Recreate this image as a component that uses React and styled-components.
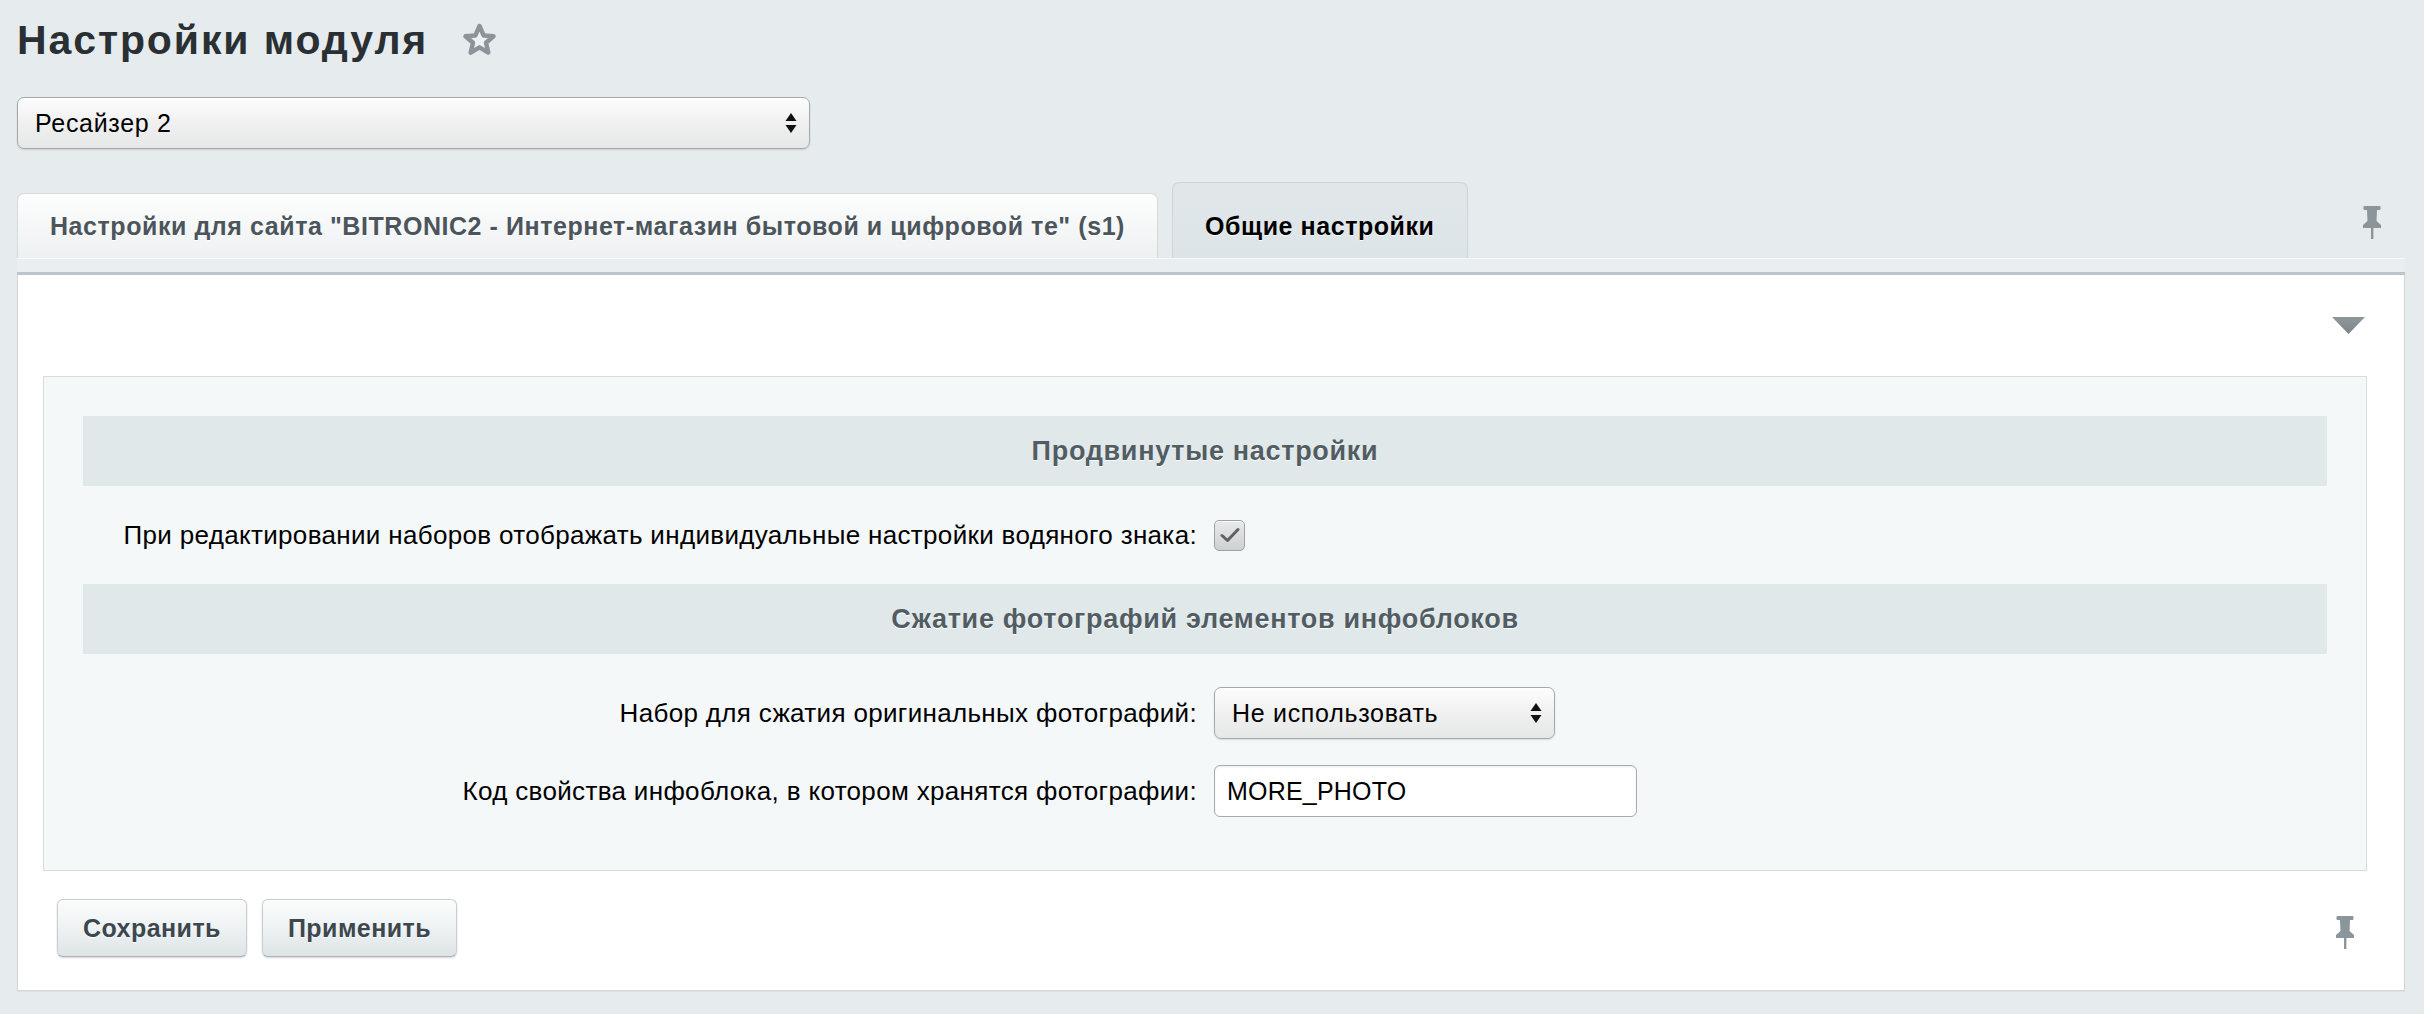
import React from "react";
import styled, { createGlobalStyle } from "styled-components";

const GlobalStyle = createGlobalStyle`
  html, body { margin: 0; padding: 0; }
  body {
    background: #e6ebed;
    font-family: "Liberation Sans", Arial, Helvetica, sans-serif;
    color: #000;
  }
`;

const Page = styled.div`
  padding: 17px 19px 23px 17px;
`;

const TitleRow = styled.div`
  display: flex;
  align-items: center;
  height: 46px;
`;

const Title = styled.h1`
  margin: 0;
  font-size: 41px;
  line-height: 46px;
  font-weight: bold;
  color: #2a2f33;
  letter-spacing: 1.9px;
`;

const StarWrap = styled.span`
  display: inline-flex;
  margin-left: 34px;
  width: 35px;
  height: 34px;
`;

const SelectBox = styled.div`
  box-sizing: border-box;
  display: flex;
  align-items: center;
  justify-content: space-between;
  width: ${(p) => p.$width}px;
  height: 52px;
  margin-top: ${(p) => p.$mt || 0}px;
  padding: 0 12px 0 ${(p) => p.$pl || 17}px;
  border: 1px solid #a3a9ac;
  border-radius: 7px;
  background: linear-gradient(#fdfdfd, #f1f1f1 45%, #e6e7e7);
  box-shadow: 0 1px 2px rgba(0, 0, 0, 0.12), inset 0 1px 0 #fff;
  font-size: 25px;
  letter-spacing: 0.7px;
  color: #000;
`;

const Arrows = () => (
  <svg width="12" height="22" viewBox="0 0 12 22">
    <path d="M6 1 L11.5 9 H0.5 Z" fill="#111" />
    <path d="M6 21 L11.5 13 H0.5 Z" fill="#111" />
  </svg>
);

const TabsRow = styled.div`
  display: flex;
  align-items: flex-end;
  gap: 14px;
  margin-top: 33px;
  height: 76px;
`;

const Tab = styled.div`
  box-sizing: border-box;
  height: ${(p) => (p.$active ? 76 : 65)}px;
  padding: ${(p) => (p.$active ? 28 : 17)}px 32px 0 32px;
  border: 1px solid ${(p) => (p.$active ? "#cdd5d8" : "#d3dadd")};
  border-bottom: none;
  border-radius: 7px 7px 0 0;
  background: ${(p) =>
    p.$active
      ? "linear-gradient(#e1e7e9, #dde4e7)"
      : "linear-gradient(#fdfdfd, #eef1f2)"};
  font-size: 25px;
  line-height: 30px;
  letter-spacing: 0.56px;
  font-weight: bold;
  white-space: nowrap;
  color: ${(p) => (p.$active ? "#000" : "#4b555b")};
  text-shadow: 0 1px 0 rgba(255, 255, 255, 0.8);
`;

const PinSlot = styled.div`
  margin-left: auto;
  margin-right: 23px;
  align-self: flex-start;
  margin-top: 24px;
  display: flex;
`;

const Pin = () => (
  <svg width="20" height="33" viewBox="0 0 20 33">
    <g fill="#8c9599">
      <rect x="1.5" y="0" width="17" height="4" rx="1" />
      <path d="M5 4 H15 L14.5 16 H5.5 Z" />
      <path d="M5.5 15 H14.5 L19 19 V22 H1 V19 Z" />
      <rect x="9" y="22" width="2.4" height="11" />
    </g>
  </svg>
);

const TabStrip = styled.div`
  height: 13px;
  background: #e9eef0;
  border-top: 1px solid #f6f8f9;
  border-bottom: 3px solid #bcc5c9;
`;

const Panel = styled.div`
  background: #fff;
  border: 1px solid #d0d7da;
  border-top: none;
  box-shadow: 0 1px 1px rgba(0, 0, 0, 0.04);
`;

const PanelHead = styled.div`
  height: 101px;
  display: flex;
  align-items: center;
  justify-content: flex-end;
  padding-right: 39px;
`;

const Collapse = () => (
  <svg width="33" height="17" viewBox="0 0 33 17">
    <defs>
      <linearGradient id="tri" x1="0" y1="0" x2="0" y2="1">
        <stop offset="0" stopColor="#8f979b" />
        <stop offset="1" stopColor="#7d8589" />
      </linearGradient>
    </defs>
    <path d="M0 0 H33 L16.5 17 Z" fill="url(#tri)" />
  </svg>
);

const Inner = styled.div`
  margin: 0 37px 0 25px;
  border: 1px solid #d5dde0;
  background: #f5f8f9;
  padding: 39px 39px 53px;
`;

const SectionHead = styled.div`
  height: 70px;
  display: flex;
  align-items: center;
  justify-content: center;
  background: #e0e8ea;
  font-size: 27px;
  letter-spacing: 0.7px;
  font-weight: bold;
  color: #515d63;
  text-shadow: 0 1px 0 #fff;
`;

const FieldRow = styled.div`
  display: grid;
  grid-template-columns: 1fr 1fr;
  align-items: center;
  height: ${(p) => p.$h || 52}px;
  margin-top: ${(p) => p.$mt || 0}px;
`;

const Label = styled.div`
  text-align: right;
  padding-right: 8px;
  font-size: 26px;
  letter-spacing: 0.33px;
  color: #000;
  white-space: nowrap;
`;

const Field = styled.div`
  padding-left: 9px;
  display: flex;
  align-items: center;
`;

const CheckBox = styled.span`
  box-sizing: border-box;
  width: 31px;
  height: 31px;
  display: inline-flex;
  align-items: center;
  justify-content: center;
  border: 1px solid #9ca2a5;
  border-radius: 5px;
  background: linear-gradient(#e9eaea, #cdd0d1);
  box-shadow: inset 0 1px 0 rgba(255, 255, 255, 0.7);
`;

const TextInput = styled.div`
  box-sizing: border-box;
  width: 423px;
  height: 52px;
  display: flex;
  align-items: center;
  padding-left: 12px;
  border: 1px solid #a5abae;
  border-radius: 6px;
  background: #fff;
  box-shadow: inset 0 1px 2px rgba(0, 0, 0, 0.08);
  font-size: 25px;
  letter-spacing: 0.2px;
  color: #000;
`;

const ButtonBar = styled.div`
  display: flex;
  align-items: center;
  gap: 15px;
  height: 58px;
  padding: 28px 49px 33px 39px;
`;

const Button = styled.button`
  box-sizing: border-box;
  height: 58px;
  padding: 0 25px;
  border: 1px solid #c6cfd2;
  border-bottom-color: #aab3b7;
  border-radius: 6px;
  background: linear-gradient(#fbfcfc, #eef2f3 50%, #dde4e6);
  box-shadow: 0 1px 2px rgba(0, 0, 0, 0.18), inset 0 1px 0 #fff;
  font-family: "Liberation Sans", Arial, sans-serif;
  font-size: 25px;
  letter-spacing: 0.45px;
  font-weight: bold;
  color: #3c474e;
  text-shadow: 0 1px 0 #fff;
`;

const BottomPin = styled.div`
  margin-left: auto;
  display: flex;
  margin-top: 8px;
`;

export default function App() {
  return (
    <>
      <GlobalStyle />
      <Page>
        <TitleRow>
          <Title>Настройки модуля</Title>
          <StarWrap>
            <svg width="35" height="34" viewBox="0 0 35 34">
              <path
                d="M17.5 3 L21.6 12.4 L31.5 13.2 L24 19.8 L26.3 29.6 L17.5 24.4 L8.7 29.6 L11 19.8 L3.5 13.2 L13.4 12.4 Z"
                fill="#eef1f3"
                stroke="#8b949a"
                strokeWidth="4.5"
                strokeLinejoin="round"
              />
            </svg>
          </StarWrap>
        </TitleRow>

        <SelectBox $width={793} $mt={34} $pl={17}>
          <span>Ресайзер 2</span>
          <Arrows />
        </SelectBox>

        <TabsRow>
          <Tab>Настройки для сайта "BITRONIC2 - Интернет-магазин бытовой и цифровой те" (s1)</Tab>
          <Tab $active>Общие настройки</Tab>
          <PinSlot>
            <Pin />
          </PinSlot>
        </TabsRow>
        <TabStrip />

        <Panel>
          <PanelHead>
            <Collapse />
          </PanelHead>
          <Inner>
            <SectionHead>Продвинутые настройки</SectionHead>
            <FieldRow $h={98}>
              <Label>При редактировании наборов отображать индивидуальные настройки водяного знака:</Label>
              <Field>
                <CheckBox>
                  <svg width="20" height="16" viewBox="0 0 20 16">
                    <path d="M2 8.5 L7.5 13.5 L18 2.5" fill="none" stroke="#5d6366" strokeWidth="3" strokeLinecap="round" strokeLinejoin="round" />
                  </svg>
                </CheckBox>
              </Field>
            </FieldRow>
            <SectionHead>Сжатие фотографий элементов инфоблоков</SectionHead>
            <FieldRow $mt={33}>
              <Label>Набор для сжатия оригинальных фотографий:</Label>
              <Field>
                <SelectBox $width={341} $pl={17}>
                  <span>Не использовать</span>
                  <Arrows />
                </SelectBox>
              </Field>
            </FieldRow>
            <FieldRow $mt={26}>
              <Label>Код свойства инфоблока, в котором хранятся фотографии:</Label>
              <Field>
                <TextInput>MORE_PHOTO</TextInput>
              </Field>
            </FieldRow>
          </Inner>
          <ButtonBar>
            <Button>Сохранить</Button>
            <Button>Применить</Button>
            <BottomPin>
              <Pin />
            </BottomPin>
          </ButtonBar>
        </Panel>
      </Page>
    </>
  );
}
